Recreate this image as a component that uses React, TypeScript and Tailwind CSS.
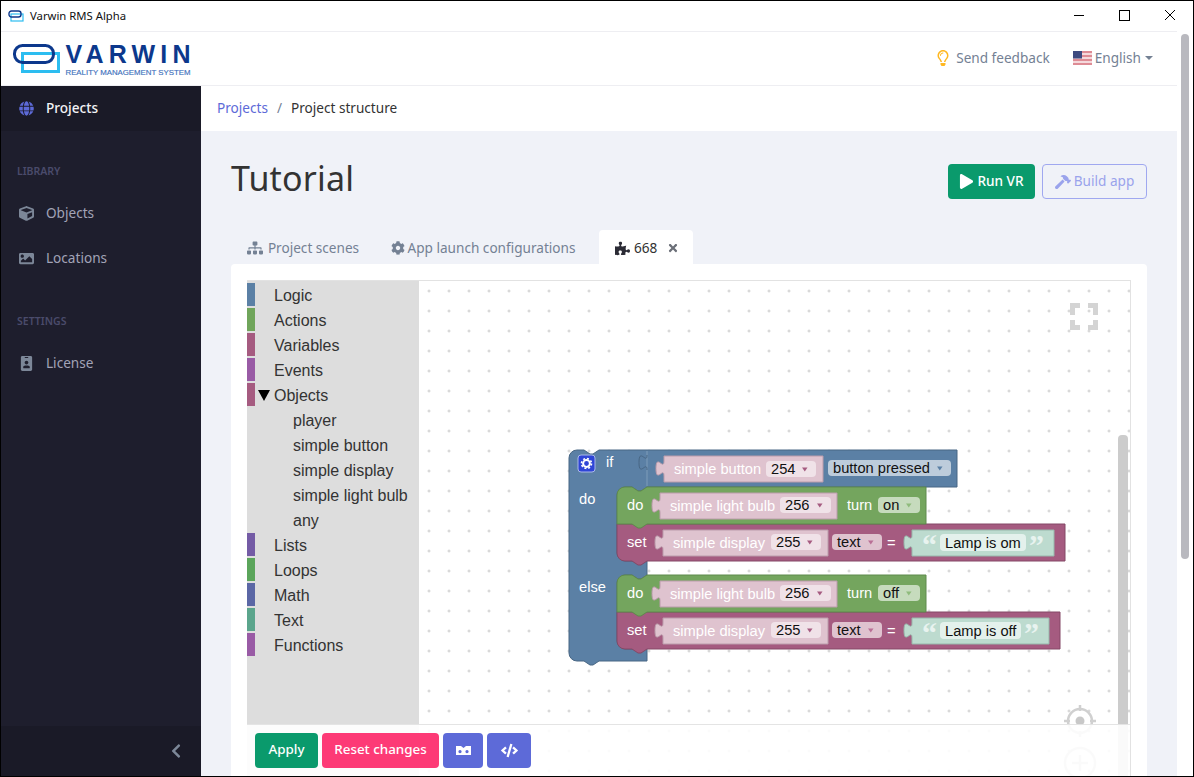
import {
  FaChevronLeft,
  FaCode,
  FaCog,
  FaCube,
  FaGlobe,
  FaHammer,
  FaIdBadge,
  FaImage,
  FaPlay,
  FaPuzzlePiece,
  FaRegLightbulb,
  FaSitemap,
  FaTimes,
} from "react-icons/fa";

const toolboxItems = [
  { label: "Logic", color: "bg-[#5b80a5]" },
  { label: "Actions", color: "bg-[#70a55b]" },
  { label: "Variables", color: "bg-[#a55b80]" },
  { label: "Events", color: "bg-[#995ba5]" },
  { label: "Objects", color: "bg-[#a55b80]", open: true },
  { label: "player", child: true },
  { label: "simple button", child: true },
  { label: "simple display", child: true },
  { label: "simple light bulb", child: true },
  { label: "any", child: true },
  { label: "Lists", color: "bg-[#745ba5]" },
  { label: "Loops", color: "bg-[#5ba55b]" },
  { label: "Math", color: "bg-[#5b67a5]" },
  { label: "Text", color: "bg-[#5ba58c]" },
  { label: "Functions", color: "bg-[#995ba5]" },
];

const NOTCH_DOWN = "l6,4 3,0 6,-4";
const NOTCH_UP = "l-6,4 -3,0 -6,-4";
const TAB_UP = "c0,-10 -8,8 -8,-7.5 s8,2.5 8,-7.5";

function SideItem({ icon, label, active }: { icon: React.ReactNode; label: string; active?: boolean }) {
  return (
    <div
      className={`flex h-[45px] items-center pl-[18px] text-[13.6px] ${
        active ? "bg-[#1a1a27] font-medium text-[#f2f2f5]" : "text-[#a2a3b7]"
      }`}
    >
      <span className={`flex w-[27px] text-[15px] ${active ? "text-[#5d6ad8]" : "text-[#7c8798]"}`}>{icon}</span>
      {label}
    </div>
  );
}

function SideLabel({ children }: { children: string }) {
  return <div className="mt-[30px] mb-[10px] h-5 pl-4 text-[10.5px] leading-5 font-semibold text-[#4a4b6b]">{children}</div>;
}

function Value({ x, y, w, fill = "#dfc3cf", stroke = "#bb9cab" }: { x: number; y: number; w: number; fill?: string; stroke?: string }) {
  return <path d={`M${x},${y} H${x + w} V${y + 26} H${x} V${y + 20} ${TAB_UP} Z`} fill={fill} stroke={stroke} />;
}

function Field({ x, y, w, text, fill, arrow, textX }: { x: number; y: number; w: number; text: string; fill: string; arrow?: string; textX?: number }) {
  return (
    <g>
      <rect x={x} y={y} width={w} height={16} rx={4} fill={fill} />
      <text x={textX ?? x + 5} y={y + 13} fontSize={14.67} fill="#111">
        {text}
      </text>
      {arrow && <path d={`M${x + w - 14},${y + 6.5} h5.5 l-2.75,4 Z`} fill={arrow} />}
    </g>
  );
}

function Label({ x, y, children }: { x: number; y: number; children: string }) {
  return (
    <text x={x} y={y} fontSize={14.67} fill="#fff">
      {children}
    </text>
  );
}

function DoBlock({ y, state }: { y: number; state: string }) {
  return (
    <g>
      <path
        d={`M617,${y + 8} a8,8 0 0 1 8,-8 H632 ${NOTCH_DOWN} H926 V${y + 37} H647 ${NOTCH_UP} H617 Z`}
        fill="#74a55e"
        stroke="#5f8a4c"
      />
      <Label x={627} y={y + 23}>do</Label>
      <Value x={660} y={y + 6} w={177} />
      <Label x={670} y={y + 24}>simple light bulb</Label>
      <Field x={780} y={y + 10} w={51} text="256" fill="#f0e2e8" arrow="#a55b80" />
      <Label x={847} y={y + 23}>turn</Label>
      <Field x={878} y={y + 10} w={42} text={state} fill="#c6dbbd" arrow="#8fbb7c" textX={883} />
    </g>
  );
}

function SetBlock({ y, text, right }: { y: number; text: string; right: number }) {
  return (
    <g>
      <path
        d={`M617,${y} H${right} V${y + 37} H647 ${NOTCH_UP} H625 a8,8 0 0 1 -8,-8 Z`}
        fill="#a55b80"
        stroke="#844966"
      />
      <Label x={627} y={y + 23}>set</Label>
      <Value x={663} y={y + 6} w={165} />
      <Label x={673} y={y + 24}>simple display</Label>
      <Field x={771} y={y + 10} w={50} text="255" fill="#f0e2e8" arrow="#a55b80" />
      <Field x={832} y={y + 10} w={50} text="text" fill="#dfc3cf" arrow="#b96f95" textX={837} />
      <Label x={887} y={y + 24}>=</Label>
      <Value x={912} y={y + 6} w={right - 11 - 912} fill="#bddbcf" stroke="#97b8ab" />
      <text x={922} y={y + 31} fontSize={30} fontWeight={700} fill="#e8f3ef" className="font-['Liberation_Serif']">“</text>
      <rect x={940} y={y + 10} width={right - 1065 + 86} height={17} rx={4} fill="#e4f1ec" />
      <text x={945} y={y + 24} fontSize={14.67} fill="#111">{text}</text>
      <text x={right - 36} y={y + 31} fontSize={30} fontWeight={700} fill="#e8f3ef" className="font-['Liberation_Serif']">”</text>
    </g>
  );
}

function Workspace() {
  return (
    <svg className="absolute inset-0 h-full w-full font-['Liberation_Sans']">
      <defs>
        <pattern id="grid" x="419" y="281" width="20" height="20" patternUnits="userSpaceOnUse">
          <path d="M8.5,10 h3 M10,8.5 v3" stroke="#ccc" strokeWidth="1" />
        </pattern>
      </defs>
      <g transform="translate(-419,-281)">
        <rect x="419" y="281" width="720" height="500" fill="url(#grid)" />

        {/* if / else block */}
        <path
          d="M569,458 a8,8 0 0 1 8,-8 H584 l6,4 3,0 6,-4 H957 V487 H647 l-6,4 -3,0 -6,-4 H625 a8,8 0 0 0 -8,8 V553 a8,8 0 0 0 8,8 H647 V575 l-6,4 -3,0 -6,-4 H625 a8,8 0 0 0 -8,8 V641 a8,8 0 0 0 8,8 H647 V661 H599 l-6,4 -3,0 -6,-4 H577 a8,8 0 0 1 -8,-8 Z"
          fill="#5b80a5"
          stroke="#486684"
        />
        <path d="M647,451 V486" fill="none" stroke="#7f9cb9" />
        <path d="M647,455 c0,10 -8,-8 -8,7.5 s8,-2.5 8,7.5" fill="none" stroke="#486684" />
        <rect x="578" y="455" width="17" height="17" rx="3" fill="#2f45d6" stroke="#aab8e8" />
        <circle cx="586.5" cy="463.5" r="3.4" fill="none" stroke="#fff" strokeWidth="2" />
        <circle cx="586.5" cy="463.5" r="5" fill="none" stroke="#fff" strokeWidth="1.6" strokeDasharray="2 1.9" />
        <Label x={606} y={467}>if</Label>
        <Label x={579} y={504}>do</Label>
        <Label x={579} y={592}>else</Label>
        <Value x={664} y={456} w={159} />
        <Label x={674} y={474}>simple button</Label>
        <Field x={766} y={461} w={50} text="254" fill="#f0e2e8" arrow="#a55b80" />
        <rect x="828" y="460" width="123" height="16" rx="4" fill="#bdccdb" />
        <text x="833" y="473" fontSize={14.67} fill="#111">button pressed</text>
        <path d="M937,466.5 h5.5 l-2.75,4 Z" fill="#5b80a5" />

        <SetBlock y={524} text="Lamp is om" right={1065} />
        <DoBlock y={487} state="on" />
        <SetBlock y={612} text="Lamp is off" right={1060} />
        <DoBlock y={575} state="off" />

        {/* workspace controls */}
        <path
          d="M1070,315 V303 H1080 V308 H1075 V315 Z M1088,303 H1098 V315 H1093 V308 H1088 Z M1070,320 H1075 V325 H1080 V330 H1070 Z M1093,320 H1098 V330 H1088 V325 H1093 Z"
          fill="#d4d4d4"
        />
        <rect x="1118" y="435" width="10" height="350" rx="4" fill="#ccc" />
        <circle cx="1080" cy="721" r="12" fill="none" stroke="#d0d0d0" strokeWidth="2.5" />
        <circle cx="1080" cy="721" r="4.5" fill="#c8c8c8" />
        <path d="M1080,705 V711 M1064,721 H1070 M1090,721 H1096 M1080,731 V737" stroke="#d0d0d0" strokeWidth="2.5" />
        <circle cx="1080" cy="763" r="15" fill="none" stroke="#d0d0d0" strokeWidth="2.5" />
        <path d="M1080,755 V771 M1072,763 H1088" stroke="#d0d0d0" strokeWidth="2.5" />
      </g>
    </svg>
  );
}

function Logo() {
  return (
    <svg width="182" height="52" viewBox="0 0 182 52" className="font-['Liberation_Sans']">
      <rect x="9.5" y="20.5" width="36" height="18" fill="none" stroke="#2cbdf0" strokeWidth="3" />
      <rect x="1.5" y="12.5" width="39" height="17" rx="8" fill="none" stroke="#0c388c" strokeWidth="3" />
      <text x="52.5" y="30" fontSize="25" fontWeight="700" fill="#0c388c" textLength="125" lengthAdjust="spacing">
        VARWIN
      </text>
      <text x="52.5" y="41.7" fontSize="7.2" fill="#3f72bd" stroke="#3f72bd" strokeWidth="0.15" textLength="125" lengthAdjust="spacingAndGlyphs">
        REALITY MANAGEMENT SYSTEM
      </text>
    </svg>
  );
}

function UsFlag() {
  return (
    <svg width="19" height="14" viewBox="0 0 19 14">
      <rect width="19" height="14" fill="#f5d9dc" />
      <path d="M0,1 H19 M0,5 H19 M0,9 H19 M0,13 H19" stroke="#c8414f" strokeWidth="1.2" />
      <rect width="9" height="7.5" fill="#3d4a80" />
    </svg>
  );
}

export default function App() {
  return (
    <div className="flex h-[777px] flex-col overflow-hidden border border-black bg-white font-['Noto_Sans',sans-serif]">
      <div className="flex h-[30px] shrink-0 items-center">
        <svg width="16" height="12" viewBox="0 0 16 12" className="ml-[7px]">
          <rect x="3" y="4" width="12" height="7" fill="none" stroke="#2cbdf0" strokeWidth="1.2" />
          <rect x="1" y="1" width="12" height="6" rx="2.5" fill="none" stroke="#0c388c" strokeWidth="1.4" />
        </svg>
        <span className="ml-[6px] text-[11.3px] text-[#111]">Varwin RMS Alpha</span>
        <div className="ml-auto flex items-center text-black">
          <svg width="45" height="30" viewBox="0 0 45 30">
            <path d="M17,14.5 H27" stroke="#000" />
          </svg>
          <svg width="45" height="30" viewBox="0 0 45 30">
            <rect x="17.5" y="9.5" width="10" height="10" fill="none" stroke="#000" />
          </svg>
          <svg width="46" height="30" viewBox="0 0 46 30">
            <path d="M18,9 L28,19 M28,9 L18,19" stroke="#000" />
          </svg>
        </div>
      </div>

      <div className="flex min-h-0 flex-1">
        <div className="flex min-w-0 flex-1 flex-col">
          <header className="flex h-[55px] shrink-0 items-center border-y border-[#eeeef2] bg-white">
            <div className="ml-3 h-[52px]">
              <Logo />
            </div>
            <div className="ml-auto flex items-center text-[13.6px] text-[#748194]">
              <FaRegLightbulb className="mr-[5px] text-[16px] text-[#ffb822]" />
              <span>Send feedback</span>
              <span className="mr-[3px] ml-[23px]">
                <UsFlag />
              </span>
              <span>English</span>
              <span className="mr-[24px] ml-[4px] h-0 w-0 border-x-[4px] border-t-[4px] border-x-transparent border-t-[#748194]" />
            </div>
          </header>

          <div className="flex min-h-0 flex-1">
            <aside className="flex w-[200px] shrink-0 flex-col bg-[#1e1e2d]">
              <SideItem active icon={<FaGlobe />} label="Projects" />
              <SideLabel>LIBRARY</SideLabel>
              <SideItem icon={<FaCube />} label="Objects" />
              <SideItem icon={<FaImage />} label="Locations" />
              <SideLabel>SETTINGS</SideLabel>
              <SideItem icon={<FaIdBadge />} label="License" />
              <div className="mt-auto flex h-[50px] items-center justify-end bg-[#1a1a27] pr-[17px] text-[16px] text-[#7c8798]">
                <FaChevronLeft />
              </div>
            </aside>

            <main className="flex min-w-0 flex-1 flex-col bg-[#f0f2f8]">
              <div className="flex h-[45px] shrink-0 items-center bg-white pl-4 text-[13.6px]">
                <span className="text-[#5d6ad8]">Projects</span>
                <span className="mx-[9px] text-[#748194]">/</span>
                <span className="text-[#333]">Project structure</span>
              </div>

              <div className="flex min-h-0 flex-1 flex-col px-[30px] pt-[33px]">
                <div className="flex h-[35px] shrink-0 items-center justify-between">
                  <h1 className="-mt-[8px] text-[34px] leading-none font-normal tracking-[0.2px] text-[#333]">Tutorial</h1>
                  <div className="flex gap-[7px] text-[13.6px]">
                    <button className="flex h-[35px] w-[87px] items-center justify-center gap-[3px] rounded-[4px] bg-[#0a9a6c] font-medium text-white">
                      <FaPlay className="text-[15px]" />
                      Run VR
                    </button>
                    <button className="flex h-[35px] w-[105px] items-center justify-center gap-[3px] rounded-[4px] border border-[#a0a8f0] text-[#9aa3ec]">
                      <FaHammer className="text-[16px]" />
                      Build app
                    </button>
                  </div>
                </div>

                <div className="mt-[31px] flex h-[34px] shrink-0 items-center text-[13.6px] text-[#748194]">
                  <div className="flex w-[144px] items-center justify-center gap-[5px] pt-[2px]">
                    <FaSitemap className="text-[16px]" />
                    Project scenes
                  </div>
                  <div className="flex w-[216px] items-center justify-center gap-[3px] pt-[2px]">
                    <FaCog className="text-[14px]" />
                    App launch configurations
                  </div>
                  <div className="ml-2 flex h-[34px] w-[94px] items-center rounded-t-[4px] bg-white pt-[2px] pl-4 text-[#333]">
                    <FaPuzzlePiece className="mr-[4px] text-[15px] text-[#2b2b35]" />
                    668
                    <FaTimes className="ml-[10px] text-[12px] text-[#6b6f78]" />
                  </div>
                </div>

                <div className="min-h-0 flex-1 rounded-t-[4px] bg-white pt-4 pr-4 pl-4">
                  <div className="relative flex h-full overflow-hidden border-t border-r border-[#e2e2e2]">
                    <div className="w-[172px] shrink-0 bg-[#dddddd] pt-[2px] font-['Liberation_Sans'] text-[16px] text-[#333]">
                      {toolboxItems.map((item) => (
                        <div key={item.label} className="flex h-[25px] items-center">
                          <span className={`mb-[2px] h-[23px] w-2 shrink-0 ${item.color ?? ""}`} />
                          {item.open && <span className="mr-[4px] ml-[3px] h-0 w-0 border-x-[6.5px] border-t-[11px] border-x-transparent border-t-black" />}
                          <span className={item.child ? "ml-[38px]" : item.open ? "" : "ml-[19px]"}>{item.label}</span>
                        </div>
                      ))}
                    </div>
                    <div className="relative min-w-0 flex-1 overflow-hidden">
                      <Workspace />
                    </div>
                    <div className="absolute inset-x-0 bottom-0 flex h-[52px] gap-1 border-t border-[#e4e4e4] bg-white/90 pt-2 pl-2 text-[13.4px] font-medium text-white">
                      <button className="h-[35px] w-[63px] rounded-[4px] bg-[#0a9a6c] pb-[2px]">Apply</button>
                      <button className="h-[35px] w-[117px] rounded-[4px] bg-[#fd3a76] pb-[2px]">Reset changes</button>
                      <button className="flex h-[35px] w-10 items-center justify-center rounded-[4px] bg-[#5d6ad8]">
                        <svg width="15" height="11" viewBox="0 0 15 11">
                          <path
                            d="M0,1 H5 L7.5,3 L10,1 H15 V10 H0 Z M4,5 a1.6,1.6 0 1 0 0.01,0 Z M11,5 a1.6,1.6 0 1 0 0.01,0 Z"
                            fill="#fff"
                            fillRule="evenodd"
                          />
                        </svg>
                      </button>
                      <button className="flex h-[35px] w-11 items-center justify-center rounded-[4px] bg-[#5d6ad8] text-[17px]">
                        <FaCode />
                      </button>
                    </div>
                  </div>
                </div>
              </div>
            </main>
          </div>
        </div>

        <div className="w-4 shrink-0 bg-white pt-[3px] pl-1">
          <div className="h-[525px] w-2 rounded-full bg-[#b9b9bf]" />
        </div>
      </div>
    </div>
  );
}
